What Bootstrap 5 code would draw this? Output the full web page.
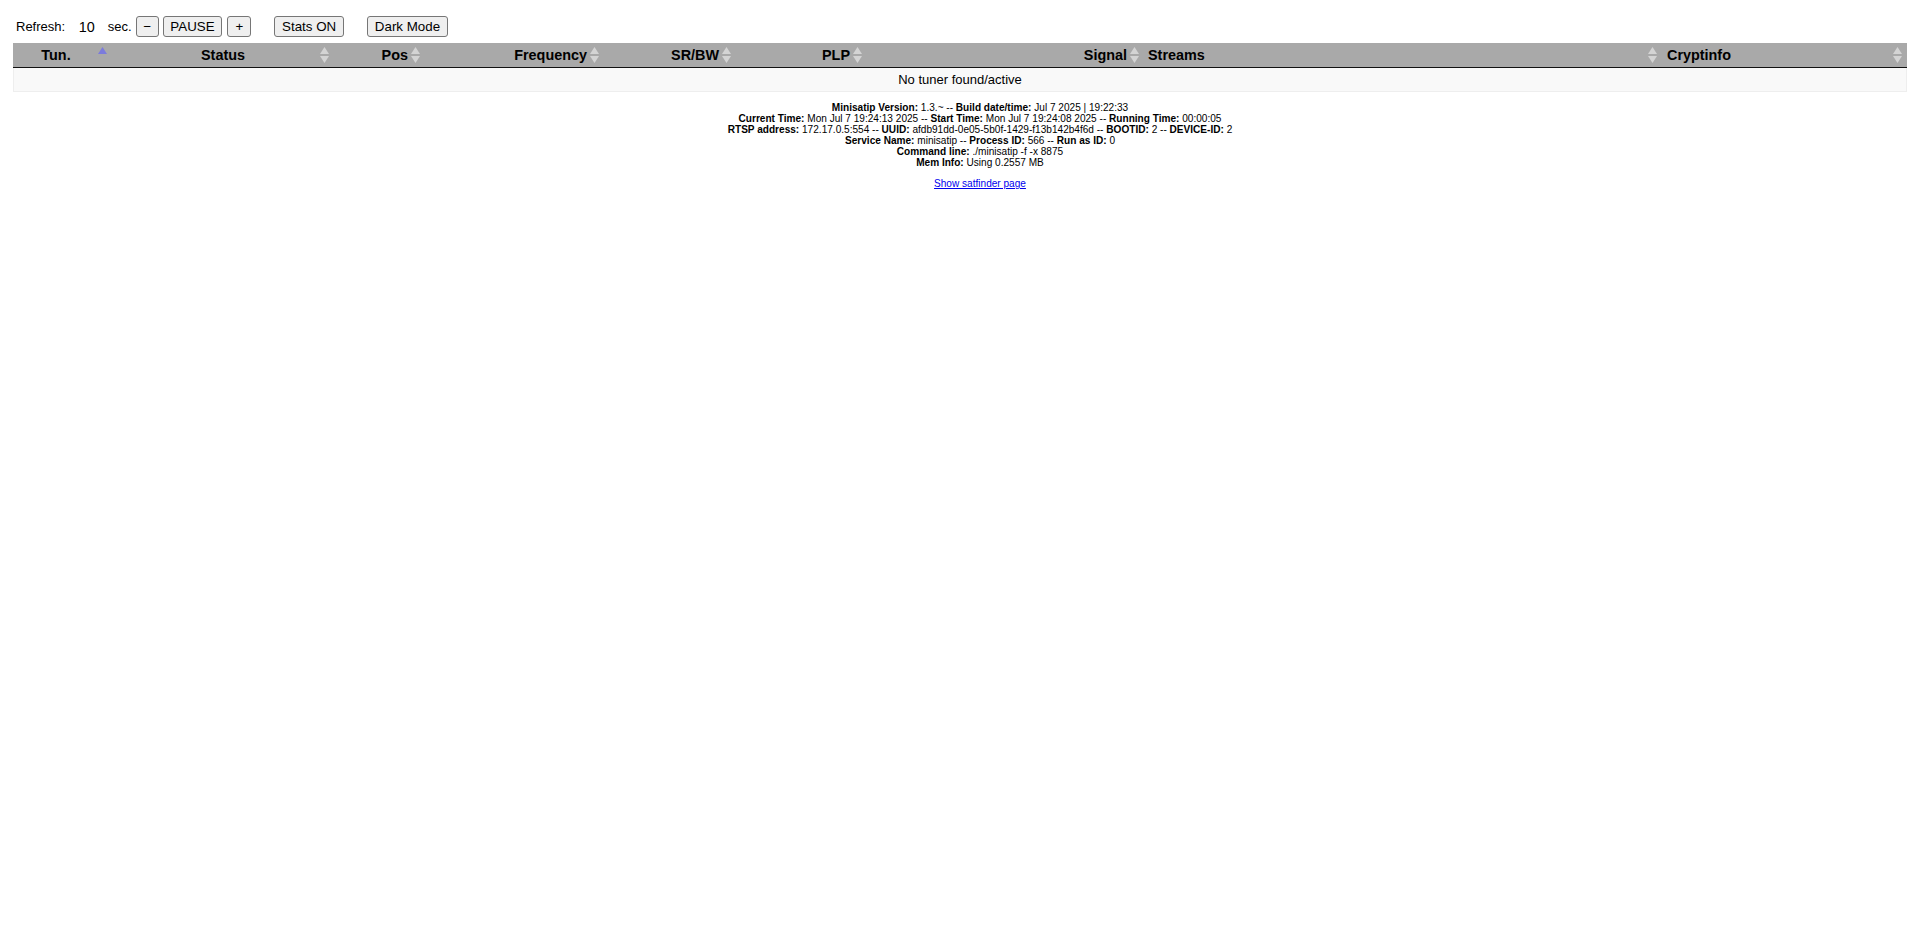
<!DOCTYPE html>
<html lang="en"><head><meta charset="utf-8"><title>Minisatip</title>
<link href="https://cdn.jsdelivr.net/npm/bootstrap@5.3.0/dist/css/bootstrap.min.css" rel="stylesheet">
<style>
html,body{background:#fff;color:#000;font-family:"Liberation Sans",Arial,sans-serif;font-size:13px;line-height:normal}
.page-wrap{padding:16px 13px 0 13px}
.top-bar{height:21px;margin-bottom:6px;gap:4px;padding-left:3px}
.top-label{font-size:13px}
.refresh-val{font-size:14.4px;margin:0 9px 0 9.5px}
.plain-btn{font-family:"Liberation Sans",Arial,sans-serif;font-size:13.33px;line-height:15px;height:21px;padding:0 6.7px;border:1px solid #767676;border-radius:3px;background:#efefef;color:#000;flex:none}
.plus-btn{padding:0 7.2px;margin-left:1px}
.gap-a{margin-left:19px}
.gap-b{margin-left:19.3px}
.tuner-table{width:1894px;table-layout:fixed;border-collapse:separate;border-spacing:0;margin:0}
.tuner-table th{position:relative;background:#a9a9a9;color:#000;font-size:14.4px;font-weight:700;height:25px;padding:0 18px 0 4px;border-bottom:1px solid #111;white-space:nowrap;vertical-align:middle;line-height:16px}
.tuner-table th.ta-r{padding-right:17px}
.tuner-table td{background:#f9f9f9;border:1px solid #eee;border-top:0;height:24px;padding:0;text-align:center;font-size:13px}
.ta-c{text-align:center}.ta-r{text-align:right}.ta-l{text-align:left}
.tuner-table th.tun-cell{padding-left:5px}
.tuner-table th.status-cell{padding-left:18px}
.tuner-table th.crypt-cell{padding-left:5px}
.sort-mark{position:absolute;right:5px;top:4px;width:9px;height:16px;display:block}
.sort-mark svg{display:block}
.info-block{text-align:center;font-size:10.08px;line-height:11px;margin-top:10px;padding-left:40px}
.info-block b{font-weight:700}
.finder-line{text-align:center;font-size:10.08px;line-height:12px;margin-top:10px;padding-left:40px}
.finder-line a{color:#00e;text-decoration:underline}
</style></head><body>
<div class="page-wrap">
<div class="top-bar d-flex align-items-center">
<span class="top-label">Refresh:</span><span class="refresh-val">10</span><span class="top-label">sec.</span>
<button class="plain-btn" type="button">−</button><button class="plain-btn" type="button">PAUSE</button><button class="plain-btn plus-btn" type="button">+</button>
<button class="plain-btn gap-a" type="button">Stats ON</button><button class="plain-btn gap-b" type="button">Dark Mode</button>
</div>
<table class="tuner-table">
<colgroup><col style="width:99px"><col style="width:222px"><col style="width:91px"><col style="width:179px"><col style="width:132px"><col style="width:131px"><col style="width:277px"><col style="width:518px"><col style="width:245px"></colgroup>
<thead><tr>
<th class="ta-c tun-cell">Tun.<span class="sort-mark"><svg width="9" height="16" viewBox="0 0 9 16"><path d="M4.5 0 9 7H0z" fill="#7b7bdc"/></svg></span></th>
<th class="ta-c status-cell">Status<span class="sort-mark"><svg width="9" height="16" viewBox="0 0 9 16"><path d="M4.5 0 9 7H0z" fill="#d4d4d4"/><path d="M4.5 16 9 9H0z" fill="#d4d4d4"/></svg></span></th>
<th class="ta-r">Pos<span class="sort-mark"><svg width="9" height="16" viewBox="0 0 9 16"><path d="M4.5 0 9 7H0z" fill="#d4d4d4"/><path d="M4.5 16 9 9H0z" fill="#d4d4d4"/></svg></span></th>
<th class="ta-r">Frequency<span class="sort-mark"><svg width="9" height="16" viewBox="0 0 9 16"><path d="M4.5 0 9 7H0z" fill="#d4d4d4"/><path d="M4.5 16 9 9H0z" fill="#d4d4d4"/></svg></span></th>
<th class="ta-r">SR/BW<span class="sort-mark"><svg width="9" height="16" viewBox="0 0 9 16"><path d="M4.5 0 9 7H0z" fill="#d4d4d4"/><path d="M4.5 16 9 9H0z" fill="#d4d4d4"/></svg></span></th>
<th class="ta-r">PLP<span class="sort-mark"><svg width="9" height="16" viewBox="0 0 9 16"><path d="M4.5 0 9 7H0z" fill="#d4d4d4"/><path d="M4.5 16 9 9H0z" fill="#d4d4d4"/></svg></span></th>
<th class="ta-r">Signal<span class="sort-mark"><svg width="9" height="16" viewBox="0 0 9 16"><path d="M4.5 0 9 7H0z" fill="#d4d4d4"/><path d="M4.5 16 9 9H0z" fill="#d4d4d4"/></svg></span></th>
<th class="ta-l">Streams<span class="sort-mark"><svg width="9" height="16" viewBox="0 0 9 16"><path d="M4.5 0 9 7H0z" fill="#d4d4d4"/><path d="M4.5 16 9 9H0z" fill="#d4d4d4"/></svg></span></th>
<th class="ta-l crypt-cell">Cryptinfo<span class="sort-mark"><svg width="9" height="16" viewBox="0 0 9 16"><path d="M4.5 0 9 7H0z" fill="#d4d4d4"/><path d="M4.5 16 9 9H0z" fill="#d4d4d4"/></svg></span></th>
</tr></thead>
<tbody><tr><td colspan="9">No tuner found/active</td></tr></tbody>
</table>
<div class="info-block">
<b>Minisatip Version:</b> 1.3.~ -- <b>Build date/time:</b> Jul 7 2025 | 19:22:33<br>
<b>Current Time:</b> Mon Jul 7 19:24:13 2025 -- <b>Start Time:</b> Mon Jul 7 19:24:08 2025 -- <b>Running Time:</b> 00:00:05<br>
<b>RTSP address:</b> 172.17.0.5:554 -- <b>UUID:</b> afdb91dd-0e05-5b0f-1429-f13b142b4f6d -- <b>BOOTID:</b> 2 -- <b>DEVICE-ID:</b> 2<br>
<b>Service Name:</b> minisatip -- <b>Process ID:</b> 566 -- <b>Run as ID:</b> 0<br>
<b>Command line:</b> ./minisatip -f -x 8875<br>
<b>Mem Info:</b> Using 0.2557 MB
</div>
<div class="finder-line"><a href="#">Show satfinder page</a></div>
</div>
<script src="https://cdn.jsdelivr.net/npm/bootstrap@5.3.0/dist/js/bootstrap.bundle.min.js"></script>
</body></html>
